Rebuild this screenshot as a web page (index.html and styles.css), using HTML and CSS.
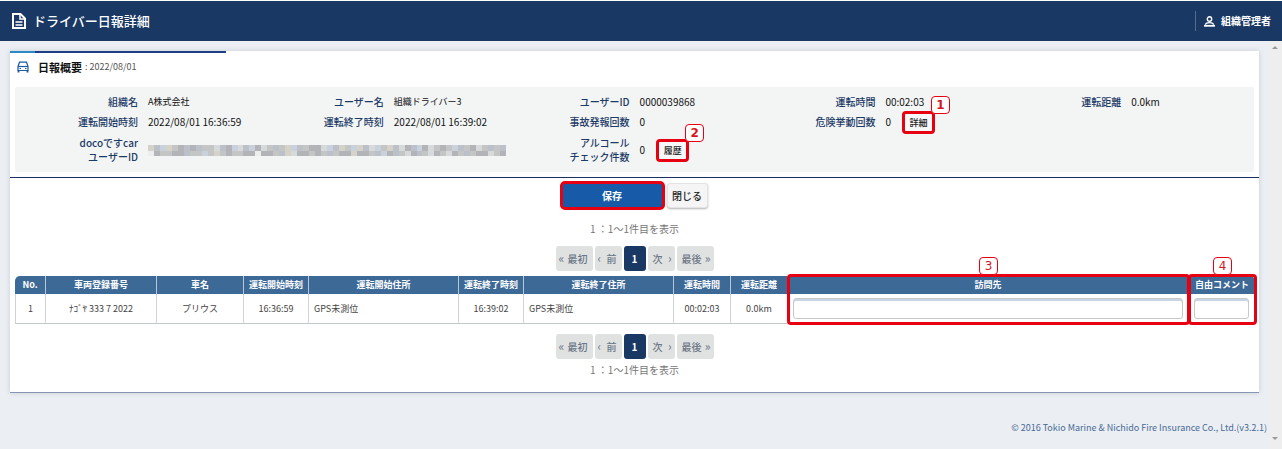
FILE: index.html
```html
<!DOCTYPE html>
<html lang="ja">
<head>
  <meta charset="utf-8">
  <title>ドライバー日報詳細</title>
  <link rel="stylesheet" href="styles.css">
</head>
<body>

  <header class="header">
    <svg class="header-icon" viewBox="0 0 14 16" width="14" height="16" fill="none" stroke="#fff" stroke-width="2">
      <path d="M1 1h7.5L13 5.500V15H1z"/>
      <path d="M8 1v5h5" stroke-width="1.500"/>
      <path d="M3.500 9h7M3.500 12h7" stroke-width="1.500"/>
    </svg>
    <h1 class="header-title">ドライバー日報詳細</h1>
    <a href="#" class="user">
      <svg viewBox="0 0 11 11" width="11" height="11" fill="none" stroke="#fff" stroke-width="1.400">
        <circle cx="5.500" cy="3" r="2.200"/>
        <path d="M1.500 8.800C1.500 7 3.500 6.600 5.500 6.600S9.500 7 9.500 8.800"/>
        <path d="M0 9.800h11" stroke-width="1.800"/>
      </svg>
      組織管理者
    </a>
  </header>

  <div class="page">
    <div class="main">
      <main class="card">
        <div class="heading">
          <svg viewBox="0 0 12 12" width="12" height="12" fill="none" stroke="#1d59a5" stroke-width="1.200">
            <path d="M1 5.500L2.500 1.200h7L11 5.500v4H1z"/>
            <path d="M1 5.500h10"/>
            <path d="M1.500 9.500v2M10.500 9.500v2" stroke-width="1.800"/>
            <path d="M2.500 7.500h1.500M8 7.500h1.500"/>
          </svg>
          <h2 class="heading-title">日報概要</h2>
          <span class="heading-date">: 2022/08/01</span>
        </div>

        <dl class="summary">
          <div class="item"><dt>組織名</dt><dd class="small">A株式会社</dd></div>
          <div class="item"><dt>ユーザー名</dt><dd class="small">組織ドライバー3</dd></div>
          <div class="item"><dt>ユーザーID</dt><dd>0000039868</dd></div>
          <div class="item"><dt>運転時間</dt><dd>00:02:03</dd></div>
          <div class="item"><dt>運転距離</dt><dd>0.0km</dd></div>

          <div class="item"><dt>運転開始時刻</dt><dd>2022/08/01 16:36:59</dd></div>
          <div class="item"><dt>運転終了時刻</dt><dd>2022/08/01 16:39:02</dd></div>
          <div class="item"><dt>事故発報回数</dt><dd>0</dd></div>
          <div class="item wide"><dt>危険挙動回数</dt>
            <dd>0
              <span class="marked"><button class="btn-small">詳細</button><b class="badge badge-corner">1</b></span>
            </dd>
          </div>

          <div class="item wide"><dt>docoですcar<br>ユーザーID</dt>
            <dd><svg class="mosaic" id="mosaic" viewBox="0 0 60 2" preserveAspectRatio="none" shape-rendering="crispEdges"></svg></dd>
          </div>
          <div class="item"><dt>アルコール<br>チェック件数</dt>
            <dd>0
              <span class="marked"><button class="btn-small">履歴</button><b class="badge badge-corner">2</b></span>
            </dd>
          </div>
        </dl>

        <div class="actions">
          <button class="btn-save">保存</button>
          <button class="btn-close">閉じる</button>
        </div>

        <p class="count">1 ：1〜1件目を表示</p>
        <nav class="pager">
          <button class="end"><i>«</i>最初</button>
          <button><i>‹</i>前</button>
          <button class="current">1</button>
          <button>次<i>›</i></button>
          <button class="end">最後<i>»</i></button>
        </nav>

        <table class="list">
          <colgroup>
            <col class="c-no"><col class="c-plate"><col class="c-car"><col class="c-time"><col class="c-addr">
            <col class="c-time"><col class="c-addr"><col class="c-span"><col class="c-span"><col><col class="c-comment">
          </colgroup>
          <thead>
            <tr>
              <th>No.</th>
              <th>車両登録番号</th>
              <th>車名</th>
              <th>運転開始時刻</th>
              <th>運転開始住所</th>
              <th>運転終了時刻</th>
              <th>運転終了住所</th>
              <th>運転時間</th>
              <th>運転距離</th>
              <th class="framed" id="visit">訪問先<span class="frame"></span><b class="badge badge-top">3</b></th>
              <th class="framed" id="comment">自由コメント<span class="frame"></span><b class="badge badge-top">4</b></th>
            </tr>
          </thead>
          <tbody>
            <tr>
              <td>1</td>
              <td>ﾅｺﾞﾔ 333 7 2022</td>
              <td>プリウス</td>
              <td>16:36:59</td>
              <td class="left">GPS未測位</td>
              <td>16:39:02</td>
              <td class="left">GPS未測位</td>
              <td>00:02:03</td>
              <td>0.0km</td>
              <td class="field"><input type="text" aria-labelledby="visit"></td>
              <td class="field"><input type="text" aria-labelledby="comment"></td>
            </tr>
          </tbody>
        </table>

        <nav class="pager pager-bottom">
          <button class="end"><i>«</i>最初</button>
          <button><i>‹</i>前</button>
          <button class="current">1</button>
          <button>次<i>›</i></button>
          <button class="end">最後<i>»</i></button>
        </nav>
        <p class="count">1 ：1〜1件目を表示</p>
      </main>

      <footer class="footer">© 2016 Tokio Marine &amp; Nichido Fire Insurance Co., Ltd.(v3.2.1)</footer>
    </div>

    <div class="scrollbar">
      <span class="arrow-up"></span>
      <span class="arrow-down"></span>
    </div>
  </div>

  <script src="script.js"></script>
</body>
</html>
```
FILE: styles.css
```css
* {
  box-sizing: border-box;
}

body {
  margin: 0;
  padding-top: 1px;
  min-height: 100vh;
  display: flex;
  flex-direction: column;
  background-color: #fff;
  color: #222;
  font-family: "Noto Sans CJK JP", sans-serif;
  font-size: 10px;
  line-height: 14px;
}

h1, h2, p, dl, dd {
  margin: 0;
}

button, input {
  font-family: inherit;
  font-size: 10px;
}

.header {
  display: flex;
  align-items: center;
  gap: 7px;
  height: 40px;
  padding: 0 11px 0 12px;
  background-color: #193864;
  color: #fff;
}

.header-title {
  flex: 1;
  font-size: 13px;
  font-weight: 500;
}

.user {
  display: flex;
  align-items: center;
  gap: 6px;
  height: 20px;
  padding-left: 8px;
  border-left: 1px solid #566c8d;
  color: #fff;
  font-weight: bold;
  text-decoration: none;
}

.page {
  flex: 1;
  display: flex;
  background-color: #ebeff4;
}

.main {
  flex: 1;
  padding: 10px 11px 0 10px;
}

.card {
  padding-bottom: 15px;
  background-color: #fff;
  background-image: linear-gradient(to right, #2a8bc8 25px, #1d3f88 25px);
  background-size: 216px 2px;
  background-repeat: no-repeat;
  border-bottom: 1px solid #8796b5;
  box-shadow: 0 0 5px rgba(0, 0, 0, 0.15);
}

/* heading */

.heading {
  display: flex;
  align-items: center;
  height: 36px;
  padding: 0 7px 4px;
}

.heading-title {
  margin-left: 9px;
  font-size: 11px;
  font-weight: bold;
  color: #111;
}

.heading-date {
  margin-left: 3px;
  font-size: 9px;
  color: #555;
}

/* summary */

.summary {
  display: grid;
  grid-template-columns: repeat(5, 1fr);
  grid-template-rows: 20px 20px 36px;
  margin: 0 5px;
  padding: 5px 5px 4px;
  background-color: #f3f5f5;
  border-radius: 2px;
}

.item {
  display: grid;
  grid-template-columns: 118px 1fr;
  gap: 10px;
  align-items: center;
}

.item.wide {
  grid-column: span 2;
}

.item dt {
  text-align: right;
  font-weight: 500;
  color: #1c3a66;
}

.item dd {
  display: flex;
  align-items: center;
  gap: 11px;
  color: #111;
}

.item dd.small {
  font-size: 9px;
}

.mosaic {
  width: 358px;
  height: 11px;
}

.marked {
  position: relative;
  display: flex;
  height: 23px;
  margin: -3px 0;
  border: 3px solid #e60012;
  border-radius: 4px;
}

.btn-small {
  width: 27px;
  padding: 0;
  border: none;
  border-radius: 2px;
  background-color: #f6f7f8;
  color: #222;
  font-size: 9px;
  font-weight: 500;
}

.badge {
  width: 19px;
  height: 18px;
  border: 1px solid #e60012;
  border-radius: 4px;
  background-color: #fff;
  color: #d8141c;
  font-family: "DejaVu Sans", sans-serif;
  font-size: 12px;
  font-weight: bold;
  line-height: 16px;
  text-align: center;
}

.badge-corner {
  position: absolute;
  left: 26px;
  bottom: 17px;
}

.badge-top {
  position: absolute;
  left: 50%;
  bottom: 100%;
  margin: 0 0 1px -9px;
  font-weight: normal;
}

/* save and close */

.actions {
  display: flex;
  justify-content: center;
  gap: 2px;
  margin-top: 5px;
  padding: 3px 2px 3px 0;
  border-top: 1px solid #1b2f62;
}

.btn-save {
  width: 105px;
  height: 29px;
  border: 3px solid #e60012;
  border-radius: 5px;
  background-color: #175aa8;
  color: #fff;
  font-weight: bold;
}

.btn-close {
  width: 41px;
  height: 25px;
  margin-top: 2px;
  padding: 0;
  border: 1px solid #e4e4e6;
  border-radius: 3px;
  background-color: #f5f5f6;
  box-shadow: 0 1px 2px rgba(0, 0, 0, 0.3);
  color: #222;
  font-weight: 500;
}

/* paging */

.count {
  margin-top: 9px;
  text-align: center;
  color: #777;
}

.pager {
  display: flex;
  justify-content: center;
  gap: 2px;
  margin: 10px 0 5px;
}

.pager button {
  display: flex;
  align-items: center;
  justify-content: space-between;
  width: 27px;
  height: 25px;
  padding: 0 5px 0 3px;
  border: none;
  border-radius: 3px;
  background-color: #e0e2e2;
  color: #6b7685;
  font-weight: 500;
}

.pager button:nth-child(n+4) {
  padding: 0 3px 0 5px;
}

.pager .end {
  width: 37px;
}

.pager i {
  font-size: 12px;
  font-style: normal;
  font-weight: normal;
  line-height: 12px;
  padding-bottom: 2px;
}

.pager .current {
  justify-content: center;
  width: 22px;
  padding: 0;
  background-color: #193864;
  color: #fff;
  font-weight: bold;
}

.pager-bottom {
  margin: 10px 0 0;
}

.pager-bottom + .count {
  margin-top: 4px;
}

/* list */

.list {
  width: calc(100% - 9px);
  margin: 0 4px 0 5px;
  table-layout: fixed;
  border-collapse: separate;
  border-spacing: 0;
  font-size: 9px;
}

.c-no { width: 31px; }
.c-plate { width: 111px; }
.c-car { width: 87px; }
.c-time { width: 65px; }
.c-addr { width: 150px; }
.c-span { width: 57px; }
.c-comment { width: 66px; }

.list th {
  height: 18px;
  padding: 0;
  border-right: 1px solid #b9c6d6;
  background-color: #3d6996;
  color: #fff;
  font-weight: bold;
}

.list th:first-child {
  border-top-left-radius: 5px;
}

.list th:last-child {
  border-right: none;
  border-top-right-radius: 5px;
}

.list td {
  height: 30px;
  padding: 0 5px;
  border-right: 1px solid #cfd2d6;
  border-bottom: 1px solid #c3c7cc;
  color: #444;
  text-align: center;
}

.list td:first-child {
  border-left: 1px solid #cfd2d6;
}

.list td.left {
  text-align: left;
}

.list input {
  display: block;
  width: 100%;
  height: 21px;
  border: 1px solid #c8c8c8;
  border-radius: 3px;
  background-color: #fff;
  box-shadow: inset 0 2px 0 #c9d5e6;
}

.framed {
  position: relative;
}

/* the frame reaches down over the body row */
.frame {
  position: absolute;
  top: -2px;
  left: -1px;
  right: -2px;
  height: 51px;
  border: 3px solid #e60012;
  border-radius: 4px;
  pointer-events: none;
}

/* footer */

.footer {
  padding-top: 28px;
  margin-right: -8px;
  text-align: right;
  font-size: 9px;
  color: #4a6a94;
}

.scrollbar {
  display: flex;
  flex-direction: column;
  justify-content: space-between;
  width: 12px;
  padding: 5px 4px 9px 2px;
  background-color: #eeeeef;
}

.arrow-up,
.arrow-down {
  border-left: 3px solid transparent;
  border-right: 3px solid transparent;
}

.arrow-up {
  border-bottom: 3px solid #999;
}

.arrow-down {
  border-top: 3px solid #999;
}
```
FILE: script.js
```javascript
// masked user ID, two rows of blocks
const colors = {
  a: '#b3b4b7',
  b: '#c4c6c6',
  c: '#d6dada',
  d: '#bcc1c9',
  e: '#d5d2ca',
  f: '#c9d2dc',
  w: '#eceeee'
};

const rows = [
  'edfebadadbbcdafcdfacbdbefdbaacfdebfedcfbedcadfacbabfdbacbdbd',
  'wabbaadbbfbebabbaawaabdecaababdbaaeaabdfadbcadbcabcabdbaacba'
];

const mosaic = document.getElementById('mosaic');

rows.forEach((row, y) => {
  [...row].forEach((key, x) => {
    const rect = document.createElementNS('http://www.w3.org/2000/svg', 'rect');
    rect.setAttribute('x', x);
    rect.setAttribute('y', y);
    rect.setAttribute('width', 1);
    rect.setAttribute('height', 1);
    rect.setAttribute('fill', colors[key]);
    mosaic.appendChild(rect);
  });
});
```
